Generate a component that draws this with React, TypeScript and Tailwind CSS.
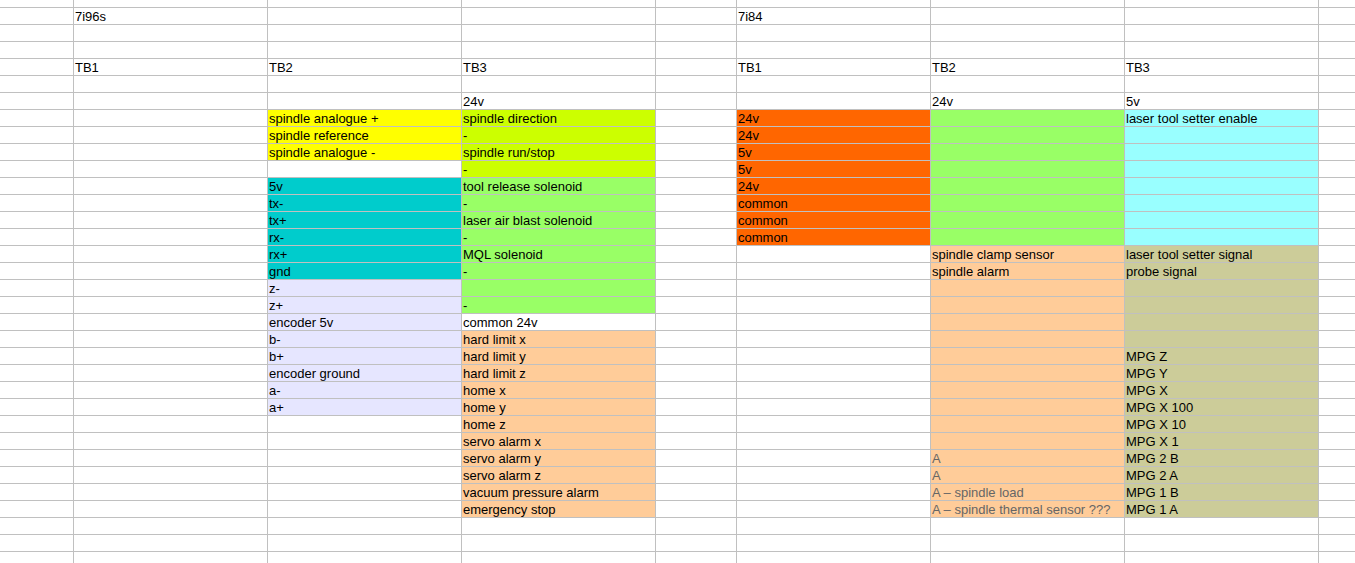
import React from "react";

type Cell = { t?: string; bg?: string; muted?: boolean };

const fills: Record<string, string> = {
  yellow: "bg-[#ffff00]",
  lime: "bg-[#ccff00]",
  orange: "bg-[#ff6600]",
  green: "bg-[#99ff66]",
  cyan: "bg-[#99ffff]",
  teal: "bg-[#00cccc]",
  lavender: "bg-[#e6e6ff]",
  peach: "bg-[#ffcc99]",
  olive: "bg-[#cccc99]",
};

const colWidths = [
  "w-[74px]",
  "w-[194px]",
  "w-[194px]",
  "w-[194px]",
  "w-[81px]",
  "w-[194px]",
  "w-[194px]",
  "w-[194px]",
  "w-[36px]",
];

const TOTAL_ROWS = 34;
const DATA_START = 7;

// build an empty sheet, then fill it
const buildSheet = () => {
  const rows: Cell[][] = [];
  for (let i = 0; i < TOTAL_ROWS; i++) {
    rows.push(Array.from({ length: 9 }, () => ({})));
  }
  const put = (col: number, start: number, items: string[], bg?: string, muted?: boolean) => {
    items.forEach((t, k) => {
      rows[start + k][col] = { t, bg, muted };
    });
  };

  rows[1][1] = { t: "7i96s" };
  rows[1][5] = { t: "7i84" };
  ["TB1", "TB2", "TB3"].forEach((t, k) => {
    rows[4][1 + k] = { t };
    rows[4][5 + k] = { t };
  });
  rows[6][3] = { t: "24v" };
  rows[6][6] = { t: "24v" };
  rows[6][7] = { t: "5v" };

  const d = DATA_START;
  // 7i96s TB2
  put(2, d, ["spindle analogue +", "spindle reference", "spindle analogue -"], "yellow");
  put(2, d + 4, ["5v", "tx-", "tx+", "rx-", "rx+", "gnd"], "teal");
  put(
    2,
    d + 10,
    ["z-", "z+", "encoder 5v", "b-", "b+", "encoder ground", "a-", "a+"],
    "lavender"
  );

  // 7i96s TB3
  put(3, d, ["spindle direction", "-", "spindle run/stop", "-"], "lime");
  put(
    3,
    d + 4,
    ["tool release solenoid", "-", "laser air blast solenoid", "-", "MQL solenoid", "-", "", "-"],
    "green"
  );
  put(3, d + 12, ["common 24v"]);
  put(
    3,
    d + 13,
    [
      "hard limit x",
      "hard limit y",
      "hard limit z",
      "home x",
      "home y",
      "home z",
      "servo alarm x",
      "servo alarm y",
      "servo alarm z",
      "vacuum pressure alarm",
      "emergency stop",
    ],
    "peach"
  );

  // 7i84 TB1
  put(5, d, ["24v", "24v", "5v", "5v", "24v", "common", "common", "common"], "orange");

  // 7i84 TB2
  put(6, d, ["", "", "", "", "", "", "", ""], "green");
  put(
    6,
    d + 8,
    ["spindle clamp sensor", "spindle alarm", "", "", "", "", "", "", "", "", "", "", ""],
    "peach"
  );
  put(
    6,
    d + 20,
    ["A", "A", "A \u2013 spindle load", "A \u2013 spindle thermal sensor ???"],
    "peach",
    true
  );

  // 7i84 TB3
  put(7, d, ["laser tool setter enable", "", "", "", "", "", "", ""], "cyan");
  put(
    7,
    d + 8,
    [
      "laser tool setter signal",
      "probe signal",
      "",
      "",
      "",
      "",
      "MPG Z",
      "MPG Y",
      "MPG X",
      "MPG X 100",
      "MPG X 10",
      "MPG X 1",
      "MPG 2 B",
      "MPG 2 A",
      "MPG 1 B",
      "MPG 1 A",
    ],
    "olive"
  );

  return rows;
};

const App = () => {
  const rows = buildSheet();

  return (
    <div className="w-[1355px] h-[563px] overflow-hidden bg-white font-['Liberation_Sans',Arial,sans-serif] text-[13px] text-black">
      {rows.map((row, i) => (
        <div key={i} className={`flex ${i === 0 ? "h-[8px]" : "h-[17px]"}`}>
          {row.map((c, j) => (
            <div
              key={j}
              className={`${colWidths[j]} shrink-0 h-full border-b border-r border-[#c0c0c0] pl-[1px] leading-[18px] whitespace-nowrap overflow-hidden ${
                j === 8 ? "border-r-0" : ""
              } ${c.bg ? fills[c.bg] : ""} ${c.muted ? "text-[#666666]" : ""}`}
            >
              {c.t}
            </div>
          ))}
        </div>
      ))}
    </div>
  );
};

export default App;
